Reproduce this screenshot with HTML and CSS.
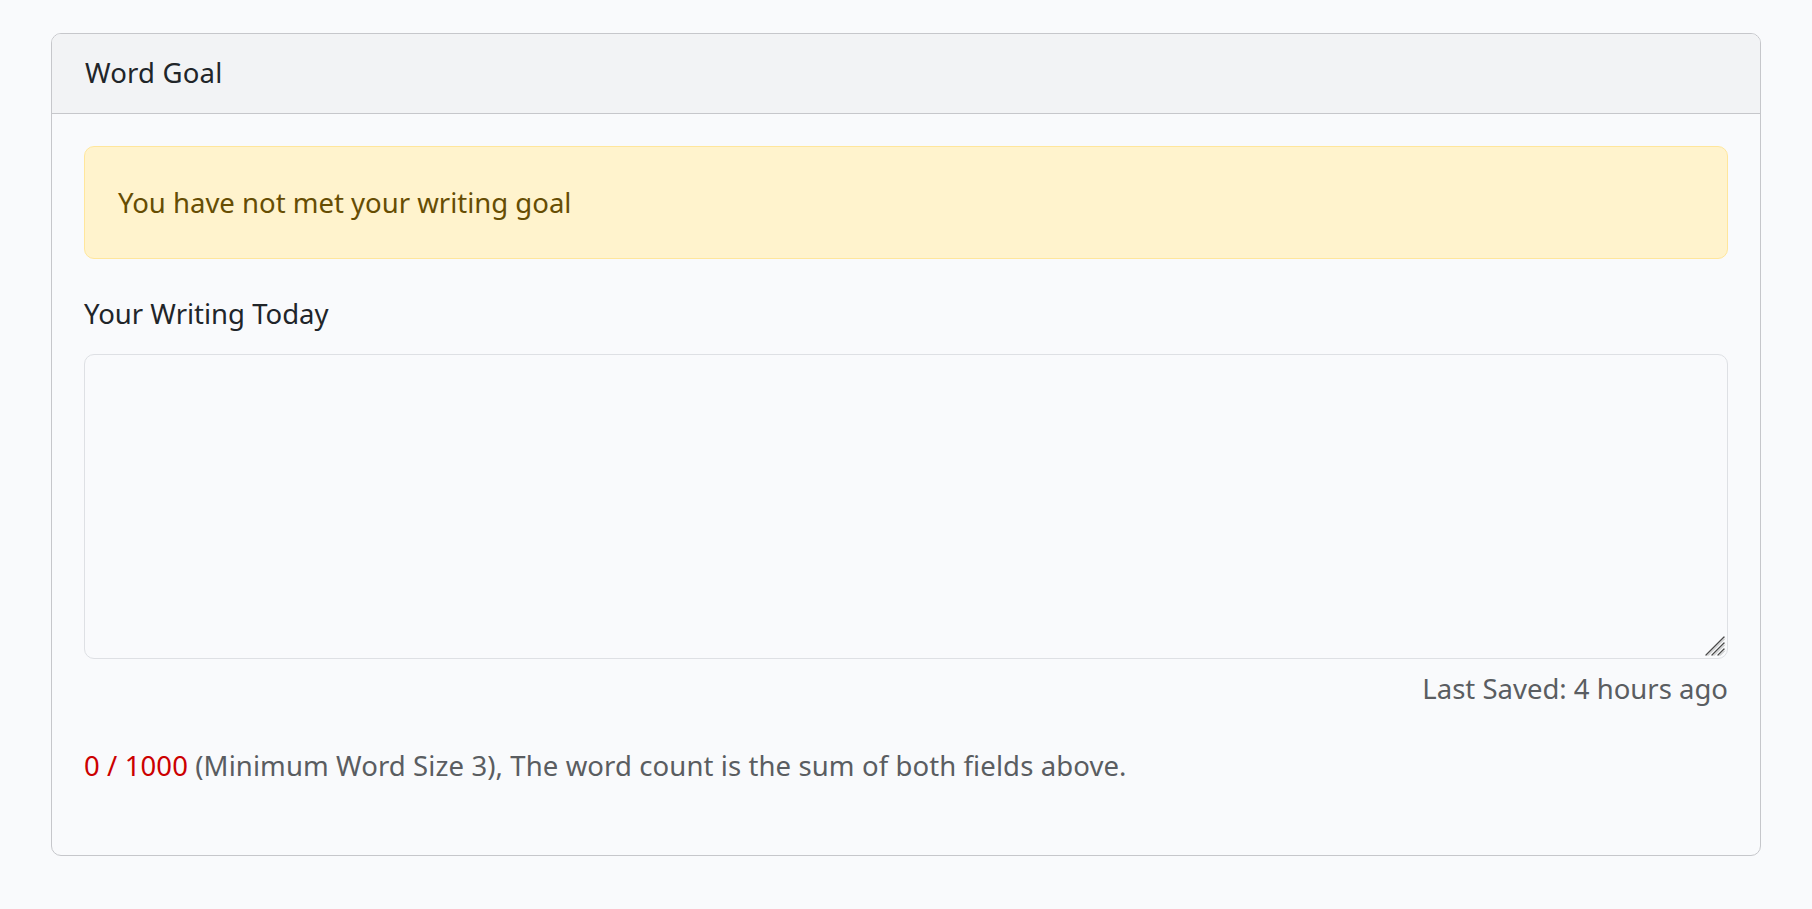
FILE: index.html
```html
<!DOCTYPE html>
<html lang="en">
<head>
<meta charset="utf-8">
<title>Word Goal</title>
<link rel="stylesheet" href="styles.css">
</head>
<body>
<div class="page">
  <section class="card">
    <header class="card-header">Word Goal</header>
    <div class="card-body">
      <div class="alert">You have not met your writing goal</div>
      <label class="field-label" for="writing">Your Writing Today</label>
      <div class="writing-wrap">
        <textarea id="writing" class="writing"></textarea>
        <svg class="grip" width="22" height="22" viewBox="0 0 22 22" aria-hidden="true">
          <g stroke="#4a4a4a" stroke-width="1.3" stroke-linecap="round">
            <line x1="2" y1="20" x2="20" y2="2"/>
            <line x1="8" y1="20" x2="20" y2="8"/>
            <line x1="14" y1="20" x2="20" y2="14"/>
          </g>
          <g stroke="#b5b5b5" stroke-width="1" stroke-linecap="round">
            <line x1="4" y1="20.5" x2="20.5" y2="4"/>
            <line x1="10" y1="20.5" x2="20.5" y2="10"/>
            <line x1="16" y1="20.5" x2="20.5" y2="16"/>
          </g>
        </svg>
      </div>
      <div class="saved">Last Saved: 4 hours ago</div>
      <p class="count"><span class="count-num">0 / 1000</span> (Minimum Word Size 3), The word count is the sum of both fields above.</p>
    </div>
  </section>
</div>
</body>
</html>
```

FILE: styles.css
```css
html, body {
  margin: 0;
  padding: 0;
  background: #f9fafc;
}
body {
  font-family: "Noto Sans", "Open Sans", sans-serif;
  font-size: 27.5px;
  line-height: 40px;
  color: #212529;
}
.page {
  padding: 33px 51px 52px 51px;
}
.card {
  border: 1.5px solid #c6c7cb;
  border-radius: 10px;
  background: #f9fafc;
  overflow: hidden;
}
.card-header {
  height: 80px;
  box-sizing: border-box;
  display: flex;
  align-items: center;
  padding: 0 33px 2px 33px;
  background: #f2f3f5;
  border-bottom: 1.5px solid #c6c7cb;
  letter-spacing: 0.2px;
}
.card-body {
  padding: 32px 32px 32px 32px;
  display: flex;
  flex-direction: column;
}
.alert {
  background: #fff3cd;
  border: 1.5px solid #ffe69c;
  border-radius: 10px;
  color: #664d03;
  padding: 35.5px 33px 35.5px 33px;
}
.field-label {
  margin-top: 35px;
  margin-bottom: 20px;
}
.writing-wrap {
  position: relative;
  display: flex;
}
.writing {
  flex: 1;
  height: 305px;
  box-sizing: border-box;
  border: 1.5px solid #dee0e4;
  border-radius: 10px;
  background: #f9fafc;
  font: inherit;
  padding: 10px 16px;
  resize: vertical;
}
.writing::-webkit-resizer {
  background: transparent;
}
.grip {
  position: absolute;
  right: 2px;
  bottom: 2px;
  pointer-events: none;
}
.saved {
  margin-top: 10px;
  text-align: right;
  color: #5a5d61;
}
.count {
  margin: 37px 0 37px 0;
  color: #5a5d61;
  letter-spacing: 0.1px;
}
.count-num {
  color: #cc0000;
}
```
